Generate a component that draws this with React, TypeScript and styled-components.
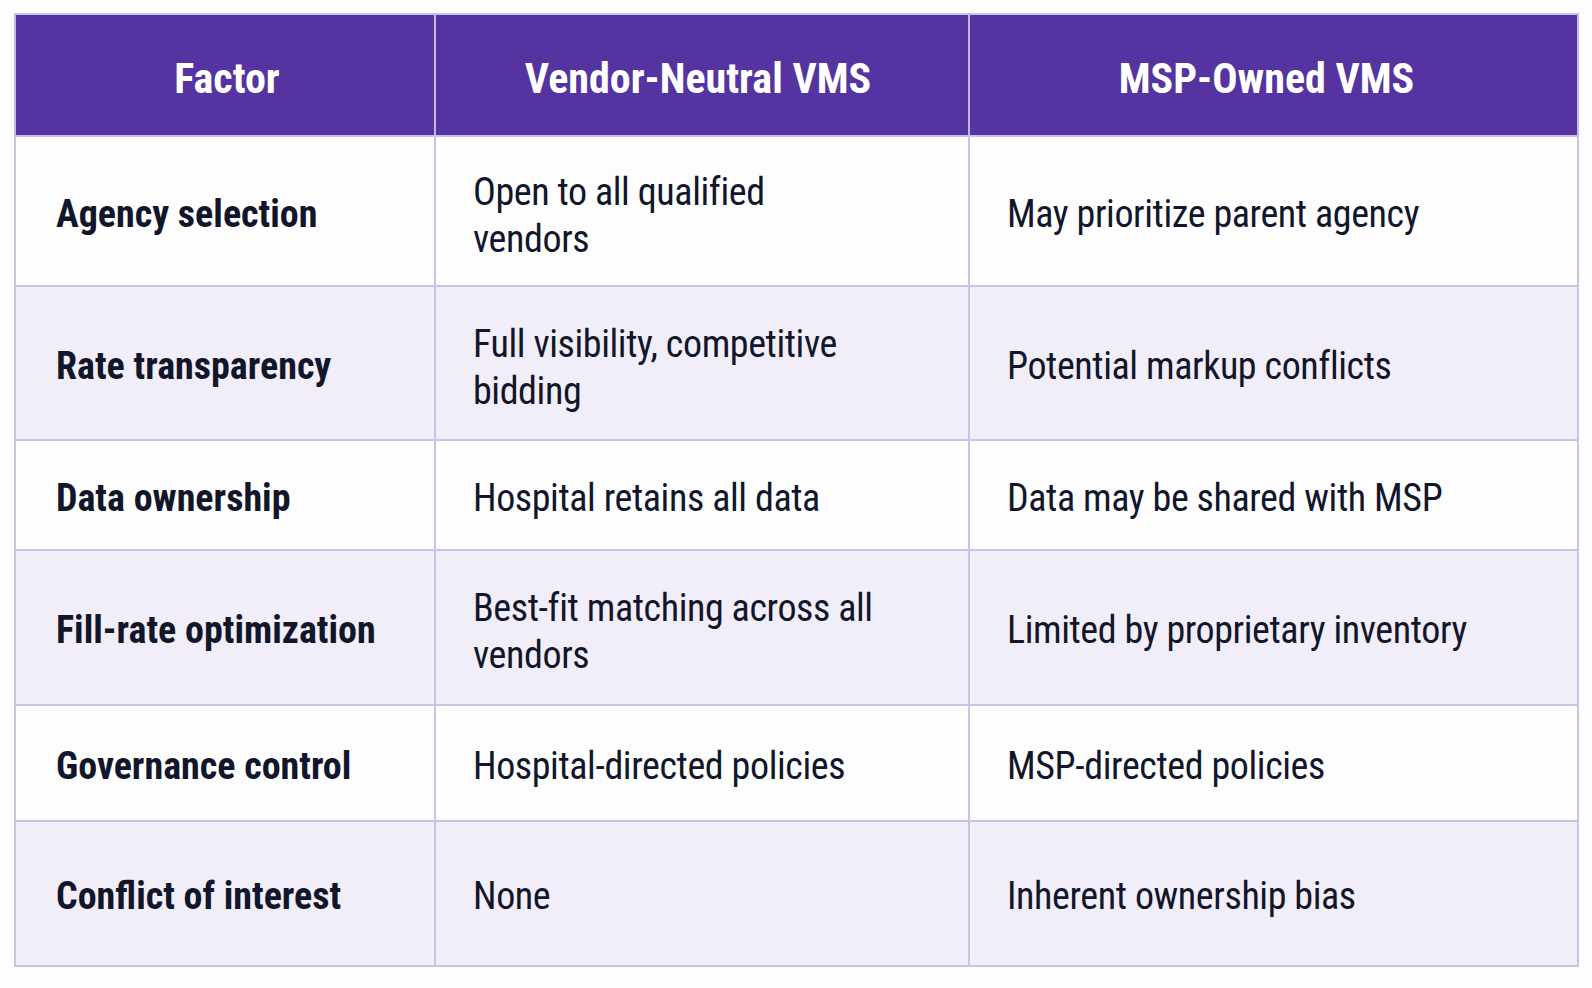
import React from "react";
import styled, { createGlobalStyle } from "styled-components";

const Global = createGlobalStyle`
  html, body { margin: 0; padding: 0; background: #fdfcfe; }
  body { font-family: "Roboto Condensed", "Liberation Sans Narrow", "Roboto", "Liberation Sans", Arial, sans-serif; }
`;

const Page = styled.div`
  padding: 13px 0 0 14px;
`;

const Table = styled.table`
  border-collapse: collapse;
  table-layout: fixed;
  width: 1563px;
`;

const HeadCell = styled.th<{ $shift: number }>`
  background: #5533a1;
  color: #ffffff;
  font-weight: 700;
  font-size: 42px;
  height: 114px;
  padding: 6px ${(p) => Math.max(0, -p.$shift) * 2}px 0 ${(p) => Math.max(0, p.$shift) * 2}px;
  text-align: center;
  vertical-align: middle;
  border: 2px solid #c9c1e2;
  border-left-color: #c6b6ea;
  border-right-color: #c6b6ea;
`;

const Row = styled.tr<{ $alt: boolean }>`
  background: ${(p) => (p.$alt ? "#f1edf9" : "#fdfdfe")};
`;

const Cell = styled.td<{ $bold?: boolean; $h: number; $multi?: boolean }>`
  height: ${(p) => p.$h - (p.$multi ? 9 : 6)}px;
  padding: ${(p) => (p.$multi ? 9 : 6)}px 0 0 ${(p) => (p.$bold ? 40 : 37)}px;
  border: 2px solid #cbc3e3;
  color: #11162a;
  font-size: 38px;
  font-weight: ${(p) => (p.$bold ? 700 : 400)};
  letter-spacing: ${(p) => (p.$bold ? "0px" : "-0.4px")};
  line-height: 47px;
  vertical-align: middle;
  white-space: nowrap;
`;

type RowData = { h: number; factor: string; neutral: string[]; msp: string };

const rows: RowData[] = [
  { h: 148, factor: "Agency selection", neutral: ["Open to all qualified", "vendors"], msp: "May prioritize parent agency" },
  { h: 152, factor: "Rate transparency", neutral: ["Full visibility, competitive", "bidding"], msp: "Potential markup conflicts" },
  { h: 108, factor: "Data ownership", neutral: ["Hospital retains all data"], msp: "Data may be shared with MSP" },
  { h: 153, factor: "Fill-rate optimization", neutral: ["Best-fit matching across all", "vendors"], msp: "Limited by proprietary inventory" },
  { h: 114, factor: "Governance control", neutral: ["Hospital-directed policies"], msp: "MSP-directed policies" },
  { h: 143, factor: "Conflict of interest", neutral: ["None"], msp: "Inherent ownership bias" },
];

export default function App() {
  return (
    <Page>
      <Global />
      <Table>
        <colgroup>
          <col style={{ width: 420 }} />
          <col style={{ width: 534 }} />
          <col style={{ width: 609 }} />
        </colgroup>
        <thead>
          <tr>
            <HeadCell $shift={2}>Factor</HeadCell>
            <HeadCell $shift={-4}>Vendor-Neutral VMS</HeadCell>
            <HeadCell $shift={-7}>MSP-Owned VMS</HeadCell>
          </tr>
        </thead>
        <tbody>
          {rows.map((r, i) => (
            <Row key={r.factor} $alt={i % 2 === 1}>
              <Cell $bold $h={r.h}>{r.factor}</Cell>
              <Cell $h={r.h} $multi={r.neutral.length > 1}>
                {r.neutral.map((line, j) => (
                  <React.Fragment key={line}>
                    {j > 0 && <br />}
                    {line}
                  </React.Fragment>
                ))}
              </Cell>
              <Cell $h={r.h}>{r.msp}</Cell>
            </Row>
          ))}
        </tbody>
      </Table>
    </Page>
  );
}
